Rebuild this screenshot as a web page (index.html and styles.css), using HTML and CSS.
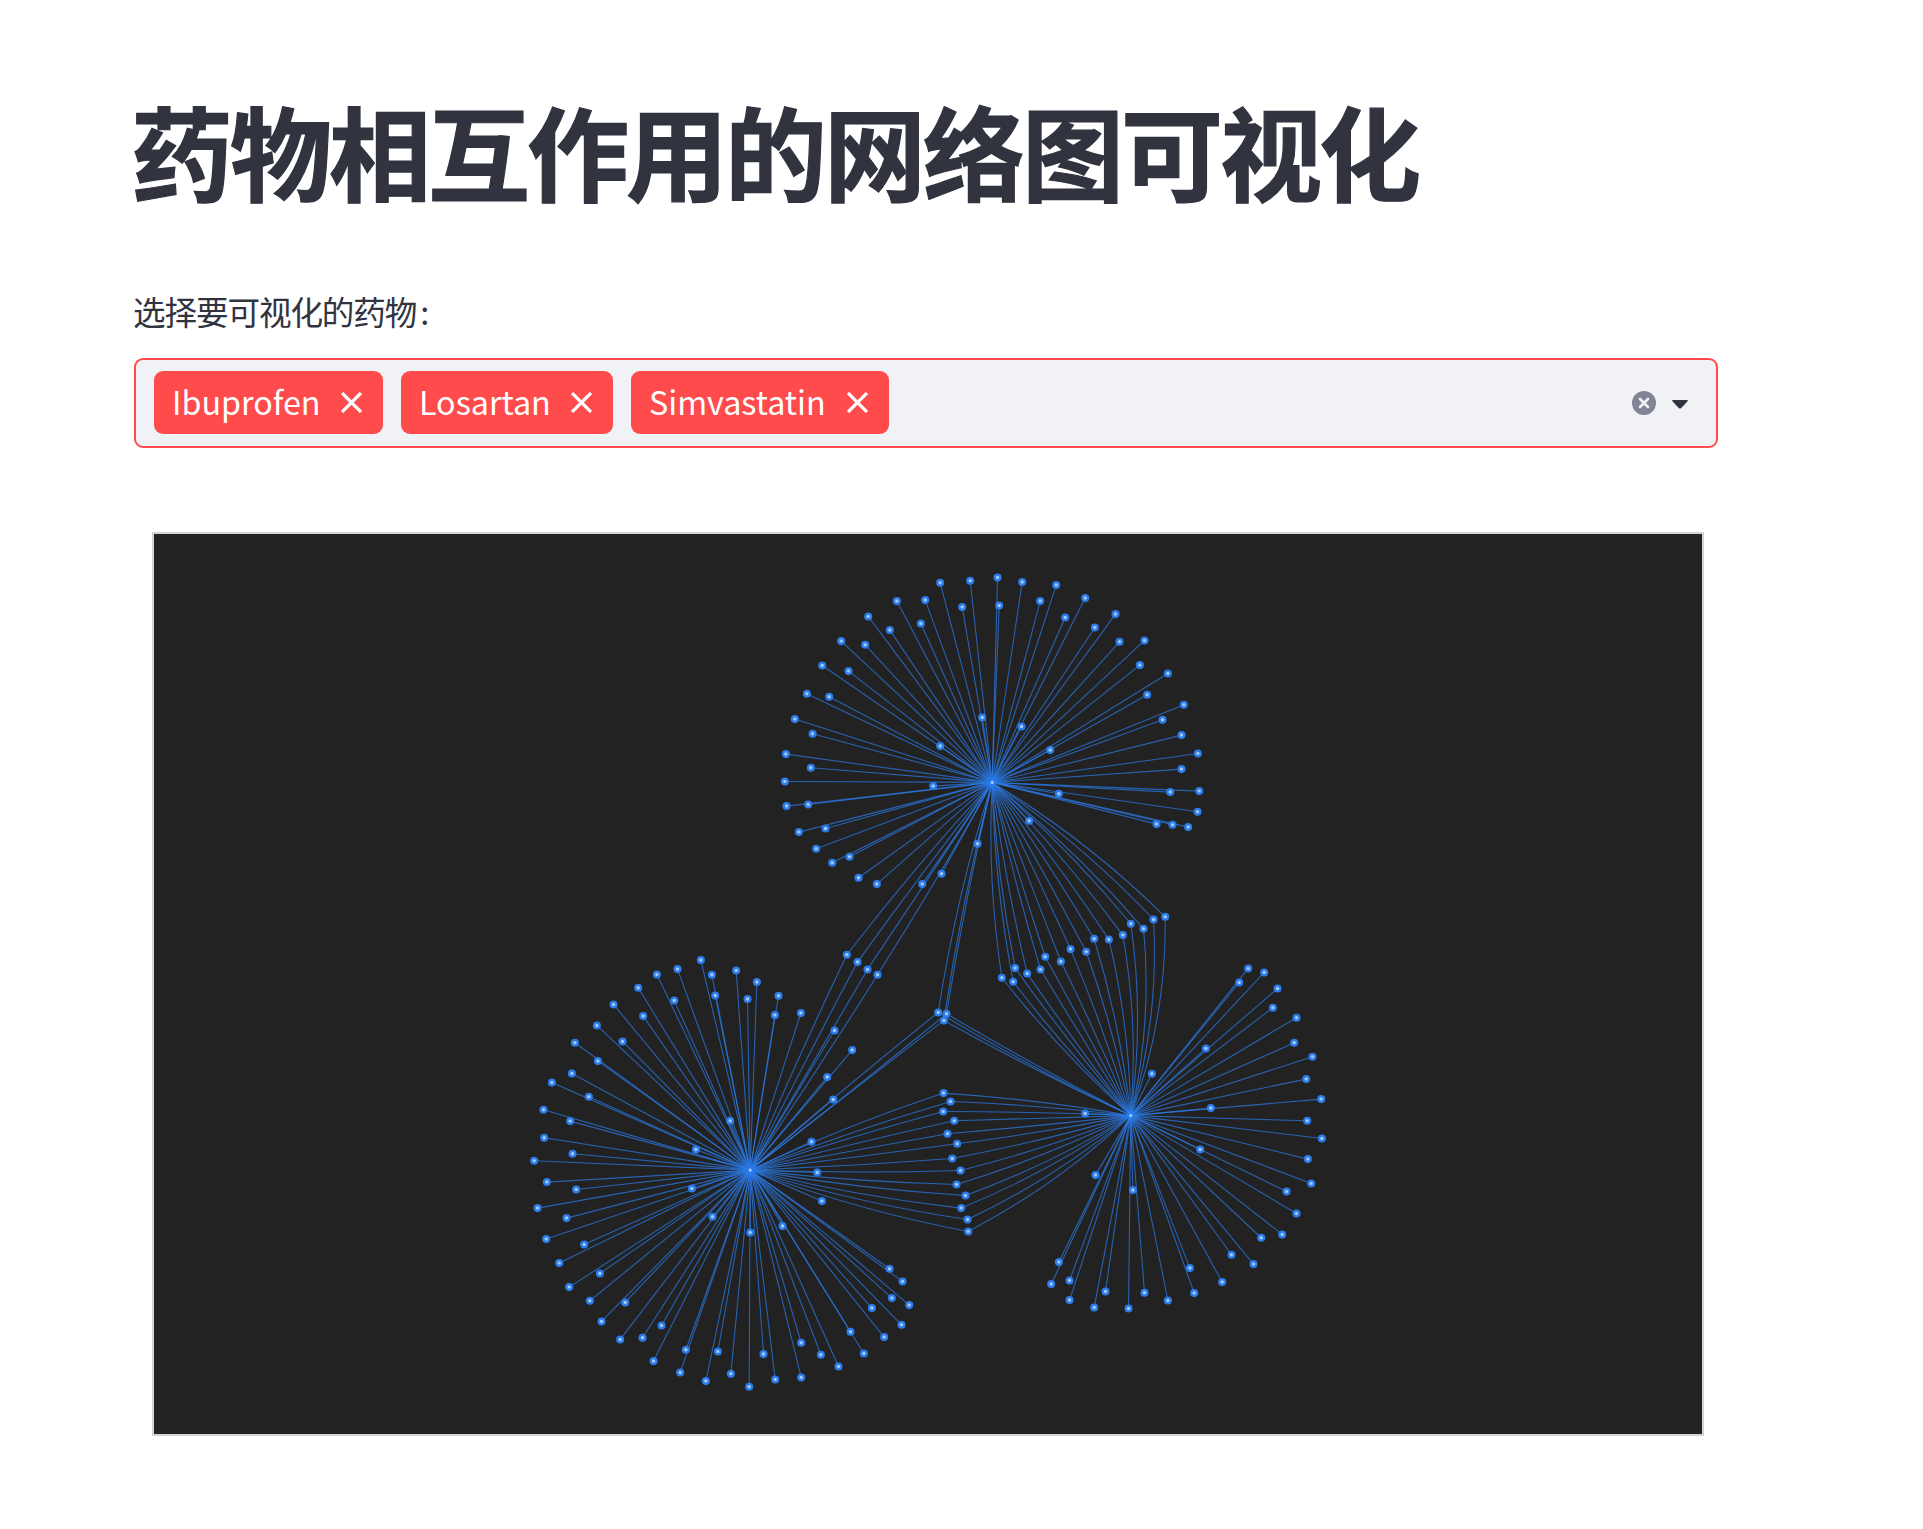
FILE: index.html
```html
<!DOCTYPE html>
<html lang="zh-CN">
<head>
<meta charset="utf-8">
<title>药物相互作用的网络图可视化</title>
<link rel="stylesheet" href="styles.css">
</head>
<body>
<main class="page">
  <h1 class="title">药物相互作用的网络图可视化</h1>
  <div class="label">选择要可视化的药物<span class="colon">:</span></div>
  <div class="select">
    <div class="tags">
      <span class="tag tag-first"><span class="name">Ibuprofen</span><svg class="close" viewBox="0 0 20 20"><path d="M1 1L19 19M19 1L1 19"/></svg></span>
      <span class="tag tag-second"><span class="name">Losartan</span><svg class="close" viewBox="0 0 20 20"><path d="M1 1L19 19M19 1L1 19"/></svg></span>
      <span class="tag tag-third"><span class="name">Simvastatin</span><svg class="close" viewBox="0 0 20 20"><path d="M1 1L19 19M19 1L1 19"/></svg></span>
    </div>
    <svg class="clear" viewBox="0 0 24 24"><circle cx="12" cy="12" r="12"/><path d="M8 8L16 16M16 8L8 16"/></svg>
    <svg class="arrow" viewBox="0 0 16 9"><path d="M1 0H15Q16.4 .4 15.4 1.4L9 8.2Q8 9 7 8.2L.6 1.4Q-.4 .4 1 0Z"/></svg>
  </div>
  <div class="network">
    <svg id="graph" class="graph" viewBox="153.8 533.9 1548 900">
      <g id="edges" class="edges"></g>
      <g id="nodes" class="nodes"></g>
    </svg>
  </div>
</main>
<script src="graph.js"></script>
</body>
</html>
```
FILE: styles.css
```css
* { box-sizing: border-box; }
body {
  margin: 0;
  background: #fff;
  color: #31333f;
  font-family: "Noto Sans CJK SC", sans-serif;
}
.page { width: 1718px; padding: 90px 0 0 134px; }
.title {
  margin: 0 0 0 -3px;
  font-size: 102px;
  line-height: 119px;
  font-weight: 700;
  letter-spacing: -3px;
  white-space: nowrap;
  -webkit-text-stroke: 1.2px #31333f;
}
.label {
  margin: 79px 0 0 -1px;
  height: 46px;
  font-size: 32.6px;
  letter-spacing: -1.1px;
  line-height: 46px;
}
.colon { margin-left: 4px; }
.select {
  display: flex;
  align-items: center;
  height: 90px;
  margin-top: 24px;
  padding: 0 28px 0 18px;
  border: 2px solid #ff4b4b;
  border-radius: 9px;
  background: #f0f2f6;
}
.tags { display: flex; flex: 1; gap: 18px; padding-bottom: 2px; }
.tag {
  display: flex;
  align-items: center;
  justify-content: space-between;
  height: 63px;
  padding: 0 21px 0 18px;
  border-radius: 9px;
  background: #ff4b4b;
  color: #fff;
  font-size: 32.3px;
}
.name { line-height: 60px; padding-bottom: 3px; }
.tag-first { width: 229px; }
.tag-second { width: 212px; }
.tag-third { width: 258px; }
.close { width: 21px; height: 21px; fill: none; stroke: #fff; stroke-width: 3.1; }
.clear { width: 24px; height: 24px; margin-right: 16px; }
.clear circle { fill: #808495; }
.clear path { fill: none; stroke: #f0f2f6; stroke-width: 2.6; stroke-linecap: round; }
.arrow { width: 16px; height: 9px; margin-top: 2px; fill: #31333f; }
.network {
  width: 1552px;
  height: 904px;
  margin: 84px 0 0 18px;
  border: 2px solid #d3d3d3;
  background: #222;
}
.graph { display: block; width: 1548px; height: 900px; }
.edges { fill: none; stroke: #2b7ce9; stroke-width: 1.1; stroke-opacity: 0.72; }
.nodes { fill: #a3c9fc; stroke: #2b7ce9; stroke-width: 2.3; }
```
FILE: graph.js
```javascript
// Node positions are kept in thirds of a pixel, relative to the origin of their group.
const hubs = { A: [992, 782.3], B: [750, 1170], C: [1130.5, 1115.5] };

const leaves = [
  { hub: 'A', origin: [770, 560], at: '510,68 600,62 380,123 465,120 576,141 294,169 359,210 452,190 213,243 285,254 156,316 235,333 110,401 177,410 74,477 127,521 47,582 122,623 44,664 49,738 114,733 86,816 166,805 138,866 186,908 238,890 265,953 320,972 456,972 514,941 622,851 489,678 510,558 636,472' },
  { hub: 'A', origin: [990, 560], at: '22,52 96,66 27,136 150,123 198,75 225,172 285,114 314,202 376,162 388,245 463,241 449,315 533,340 471,404 581,434 517,479 574,525 623,580 574,627 540,696 627,693 622,755 499,792 547,794 594,801 94,499 180,570 206,701 117,782' },
  { hub: 'B', origin: [520, 940], at: '542,60 472,87 410,103 575,104 648,91 585,166 462,181 354,143 280,193 369,228 230,256 307,304 164,308 233,363 155,400 95,427 206,470 70,509 150,543 72,593 157,641 42,662 630,542 527,628' },
  { hub: 'B', origin: [520, 1170], at: '80,36 168,58 52,114 139,144 78,207 192,223 117,279 147,351 239,310 209,392 315,397 244,454 300,508 367,503 424,466 400,573 497,539 480,607 593,544 557,633 632,611 687,650 515,55 577,140 690,187' },
  { hub: 'B', origin: [740, 940], at: '22,177 50,126 115,167 104,225 182,219 283,271 336,330 261,411 279,478 214,605 231,697' },
  { hub: 'B', origin: [740, 1170], at: '245,93 127,168 448,296 487,334 455,384 507,405 395,414 484,464 432,501 331,485 371,550 183,518 242,554 295,589 183,622 70,552 105,628' },
  { hub: 'C', origin: [1120, 940], at: '384,85 357,127 432,97 472,145 458,203 529,233 522,308 577,350 558,417 603,477 561,542 605,595 563,657 573,730 499,754 529,820 486,883 423,893 334,944 400,972 306,1026 209,984 222,1059 143,1081 73,1058 25,1105 257,325 95,401 272,504 240,628 38,750' },
  { hub: 'C', origin: [980, 890], at: '315,670 346,855 236,1116 213,1182 268,1171 268,1230 342,1252 376,1204' }
];

// Nodes shared by several hubs; each bend range runs from the first node to the last.
const shared = [
  { origin: [980, 890], bends: { A: [10, -13], C: [-8, 19] }, at: '65,263 99,275 105,234 141,250 181,238 195,200 242,214 271,177 318,185 342,146 386,148 428,135 452,101 490,116 520,88 555,80' },
  { origin: [740, 940], bends: { A: [5, -3], B: [-3, 2] }, at: '320,44 352,66 382,88 412,104' },
  { origin: [740, 940], bends: { A: [9, 4], B: [-3, 2], C: [-5, -3] }, at: '594,217 611,241 619,221' },
  { origin: [740, 940], bends: { B: [-6, 10], C: [5, -14] }, at: '610,459 631,484 609,514 642,542 622,581 651,611 636,655 661,691 649,733 676,766 663,804 682,838 684,874' }
];

const NS = 'http://www.w3.org/2000/svg';
const edges = document.getElementById('edges');
const nodes = document.getElementById('nodes');

function parse(group) {
  return group.at.split(' ').map(pair => {
    const [x, y] = pair.split(',').map(Number);
    return [group.origin[0] + x / 3, group.origin[1] + y / 3];
  });
}

function addNode([x, y], radius) {
  const circle = document.createElementNS(NS, 'circle');
  circle.setAttribute('cx', x.toFixed(2));
  circle.setAttribute('cy', y.toFixed(2));
  circle.setAttribute('r', radius);
  nodes.appendChild(circle);
}

function addEdge([x1, y1], [x2, y2], bend) {
  const dx = x2 - x1, dy = y2 - y1, length = Math.hypot(dx, dy);
  const cx = (x1 + x2) / 2 - dy / length * bend;
  const cy = (y1 + y2) / 2 + dx / length * bend;
  const path = document.createElementNS(NS, 'path');
  path.setAttribute('d', `M${x1} ${y1}Q${cx.toFixed(2)} ${cy.toFixed(2)} ${x2.toFixed(2)} ${y2.toFixed(2)}`);
  edges.appendChild(path);
}

for (const group of leaves) {
  for (const point of parse(group)) {
    addEdge(hubs[group.hub], point, 0);
    addNode(point, 2.9);
  }
}
for (const group of shared) {
  const points = parse(group);
  points.forEach((point, i) => {
    for (const [hub, [from, to]] of Object.entries(group.bends)) {
      addEdge(hubs[hub], point, from + (to - from) * i / (points.length - 1));
    }
    addNode(point, 2.9);
  });
}
for (const hub of Object.values(hubs)) addNode(hub, 2.7);
```
